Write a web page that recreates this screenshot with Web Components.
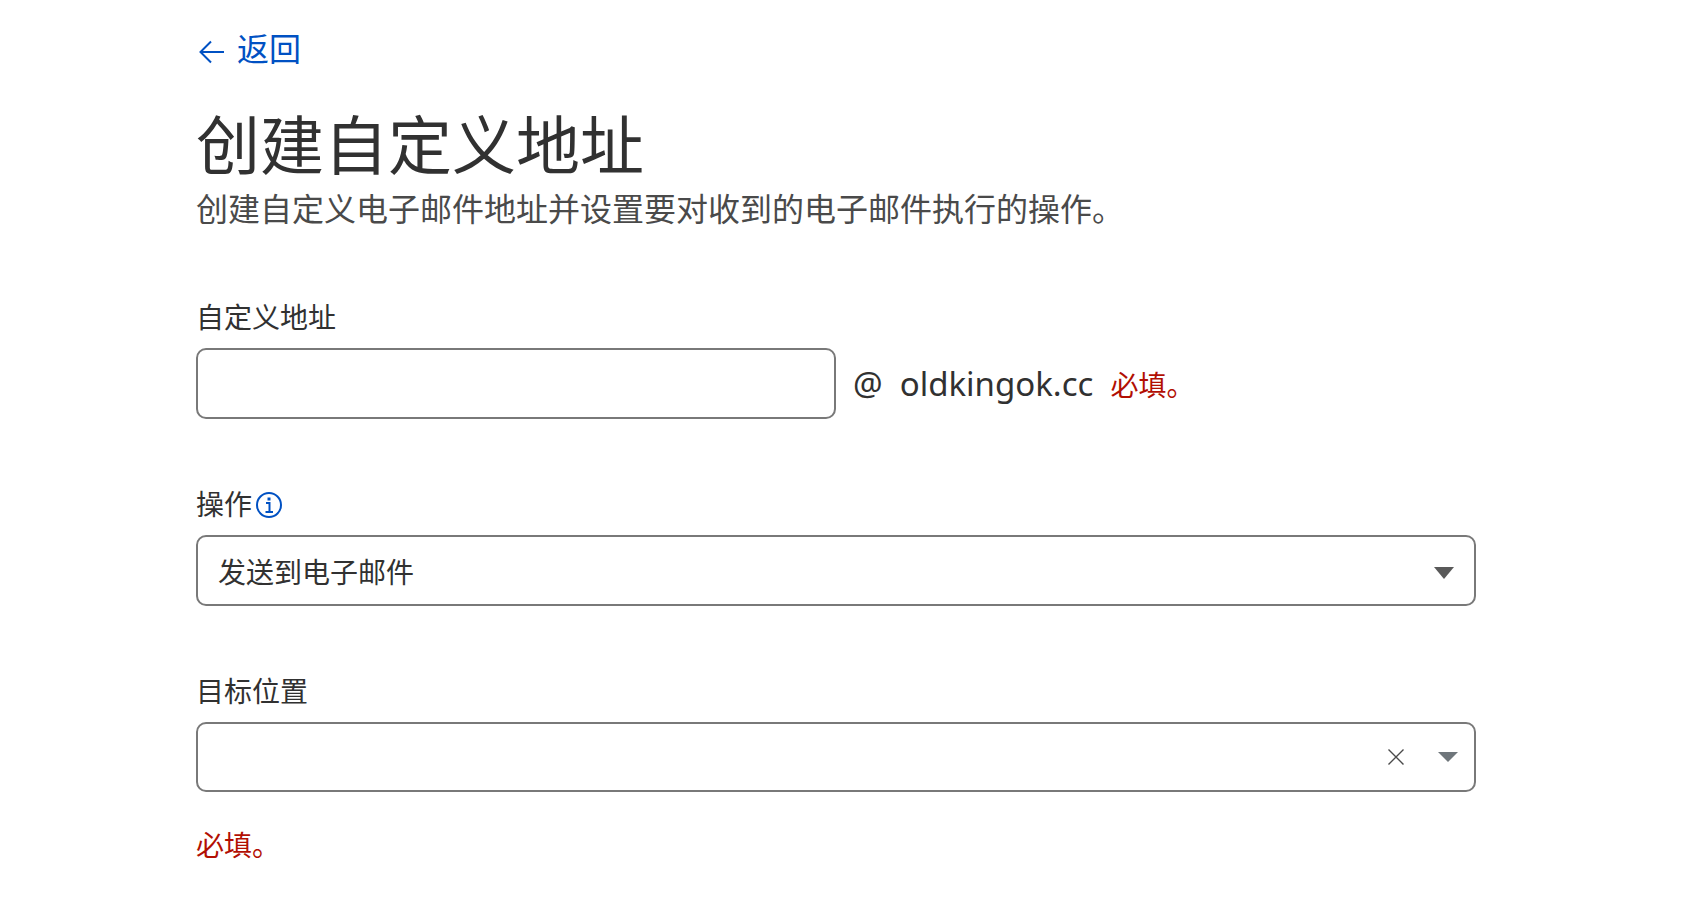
<!DOCTYPE html>
<html lang="zh-CN">
<head>
<meta charset="utf-8">
<meta name="viewport" content="width=device-width, initial-scale=1">
<title>创建自定义地址</title>
<style>
    body {
        margin: 0;
        background: #fff;
        color: #313131;
        font-family: "Noto Sans", "Noto Sans CJK SC", sans-serif;
        font-size: 28px;
        line-height: 42px;
        --cjk: "Noto Sans CJK SC", sans-serif;
        --border: #797979;
        --link: #0051c3;
        --error: #b20f03;
    }
</style>
</head>
<body>

<address-page>
    <back-link slot="back" href="#">返回</back-link>
    <page-heading slot="heading">
        创建自定义地址
        <span slot="description">创建自定义电子邮件地址并设置要对收到的电子邮件执行的操作。</span>
    </page-heading>
    <address-field label="自定义地址" domain="oldkingok.cc">
        <error-text slot="error">必填。</error-text>
    </address-field>
    <action-field label="操作" option="发送到电子邮件"></action-field>
    <target-field label="目标位置">
        <error-text slot="error">必填。</error-text>
    </target-field>
</address-page>

<script>
// label and box styles shared by all the fields
const fieldStyle = /*css*/`
    :host {
        display: block;
        font-family: var(--cjk);
    }

    * {
        box-sizing: border-box;
    }

    .label {
        display: flex;
        align-items: center;
        gap: 4px;
        margin-bottom: 11px;
    }

    .box {
        display: block;
        width: 100%;
        height: 71px;
        padding: 0 20px;
        border: 2px solid var(--border);
        border-radius: 10px;
        background: #fff;
        color: inherit;
        font: inherit;
    }

    button {
        display: flex;
        padding: 0;
        border: 0;
        background: none;
        cursor: pointer;
    }

    svg {
        display: block;
    }
`

class BaseElement extends HTMLElement
{
    constructor(){
        super();
        this.shadow = this.attachShadow({mode: "open"})
    }

    connectedCallback(){
        this.shadow.innerHTML = this.render();
    }
}

class AddressPage extends BaseElement
{
    render(){
        return /*html*/`
        <style>
        :host {
            display: block;
        }

        main {
            padding: 23px 227px 32px 196px;
        }

        header {
            margin: 31px 0 64px;
        }

        form {
            display: flex;
            flex-direction: column;
            gap: 63px;
        }

        @media (max-width: 1100px) {
            main {
                padding-left: 32px;
                padding-right: 32px;
            }
        }
        </style>
        <main>
            <slot name="back"></slot>
            <header><slot name="heading"></slot></header>
            <form><slot></slot></form>
        </main>`
    }
}

class BackLink extends BaseElement
{
    render(){
        return /*html*/`
        <style>
        :host {
            display: flex;
            font-family: var(--cjk);
            font-size: 32px;
            line-height: 48px;
        }

        a {
            display: flex;
            align-items: center;
            gap: 9px;
            color: var(--link);
            text-decoration: none;
        }

        svg {
            margin-top: 10px;
        }
        </style>
        <a href="${this.getAttribute("href")}">
            <svg width="32" height="32" viewBox="0 0 32 32" fill="none" stroke="currentColor" stroke-width="2" aria-hidden="true">
                <path d="M28 16H4.5M15 5.5L4.5 16L15 26.5"/>
            </svg>
            <slot></slot>
        </a>`
    }
}

class PageHeading extends BaseElement
{
    render(){
        return /*html*/`
        <style>
        :host {
            display: block;
            font-family: var(--cjk);
        }

        h1 {
            margin: 0 0 3px;
            font-size: 64px;
            font-weight: 400;
            line-height: 78px;
        }

        p {
            margin: 0;
            color: #4a4a4a;
            font-size: 32px;
            line-height: 48px;
        }
        </style>
        <h1><slot></slot></h1>
        <p><slot name="description"></slot></p>`
    }
}

class ErrorText extends BaseElement
{
    render(){
        return /*html*/`
        <style>
        :host {
            display: block;
            color: var(--error);
            font-family: var(--cjk);
        }
        </style>
        <slot></slot>`
    }
}

class AddressField extends BaseElement
{
    render(){
        return /*html*/`
        <style>
        ${fieldStyle}
        .row {
            display: flex;
            align-items: center;
            gap: 17px;
        }

        .box {
            width: 50%;
        }

        .domain {
            font-family: "Noto Sans", sans-serif;
            font-size: 33px;
        }
        </style>
        <label class="label" for="address">${this.getAttribute("label")}</label>
        <div class="row">
            <input class="box" id="address" type="text">
            <span class="domain">@</span>
            <span class="domain">${this.getAttribute("domain")}</span>
            <slot name="error"></slot>
        </div>`
    }
}

class ActionField extends BaseElement
{
    render(){
        return /*html*/`
        <style>
        ${fieldStyle}
        .info {
            margin-top: 4px;
            color: var(--link);
        }

        .select {
            display: grid;
            align-items: center;
        }

        .select > * {
            grid-area: 1 / 1;
        }

        select {
            appearance: none;
        }

        .arrow {
            justify-self: end;
            margin: 4px 22px 0 0;
            pointer-events: none;
        }
        </style>
        <div class="label">
            <label for="action">${this.getAttribute("label")}</label>
            <button class="info" type="button" aria-label="${this.getAttribute("label")}">
                <svg width="26" height="26" viewBox="0 0 26 26" fill="none" stroke="currentColor" stroke-width="2">
                    <circle cx="13" cy="13" r="12"/>
                    <path d="M10 11H13.5V20M9.5 20H17"/>
                    <path d="M11.5 7H14.5" stroke-width="3"/>
                </svg>
            </button>
        </div>
        <div class="select">
            <select class="box" id="action">
                <option>${this.getAttribute("option")}</option>
            </select>
            <svg class="arrow" width="20" height="12" viewBox="0 0 20 12" fill="#595959" aria-hidden="true">
                <path d="M0 0H20L10 12Z"/>
            </svg>
        </div>`
    }
}

class TargetField extends BaseElement
{
    render(){
        return /*html*/`
        <style>
        ${fieldStyle}
        .combo {
            display: flex;
            align-items: center;
            height: 70px;
            padding-right: 16px;
        }

        input {
            flex: 1;
            min-width: 0;
            height: 100%;
            padding: 0;
            border: 0;
            outline: 0;
            background: none;
            color: inherit;
            font: inherit;
        }

        .clear {
            margin-right: 34px;
        }

        .error {
            margin-top: 31px;
        }
        </style>
        <label class="label" for="target">${this.getAttribute("label")}</label>
        <div class="box combo">
            <input id="target" type="text" role="combobox" aria-expanded="false">
            <button class="clear" type="button" aria-label="清除">
                <svg width="16" height="16" viewBox="0 0 16 16" stroke="#4a4a4a" stroke-width="1.4">
                    <path d="M0.5 0.5L15.5 15.5M15.5 0.5L0.5 15.5"/>
                </svg>
            </button>
            <button class="open" type="button" aria-label="打开">
                <svg width="20" height="10" viewBox="0 0 20 10" fill="#6f767b">
                    <path d="M0 0H20L10 10Z"/>
                </svg>
            </button>
        </div>
        <div class="error"><slot name="error"></slot></div>`
    }

    connectedCallback(){
        super.connectedCallback();
        this.shadow.querySelector(".clear").addEventListener("click", () => {
            this.shadow.querySelector("input").value = "";
        });
    }
}

customElements.define('address-page', AddressPage);
customElements.define('back-link', BackLink);
customElements.define('page-heading', PageHeading);
customElements.define('error-text', ErrorText);
customElements.define('address-field', AddressField);
customElements.define('action-field', ActionField);
customElements.define('target-field', TargetField);
</script>
</body>
</html>
